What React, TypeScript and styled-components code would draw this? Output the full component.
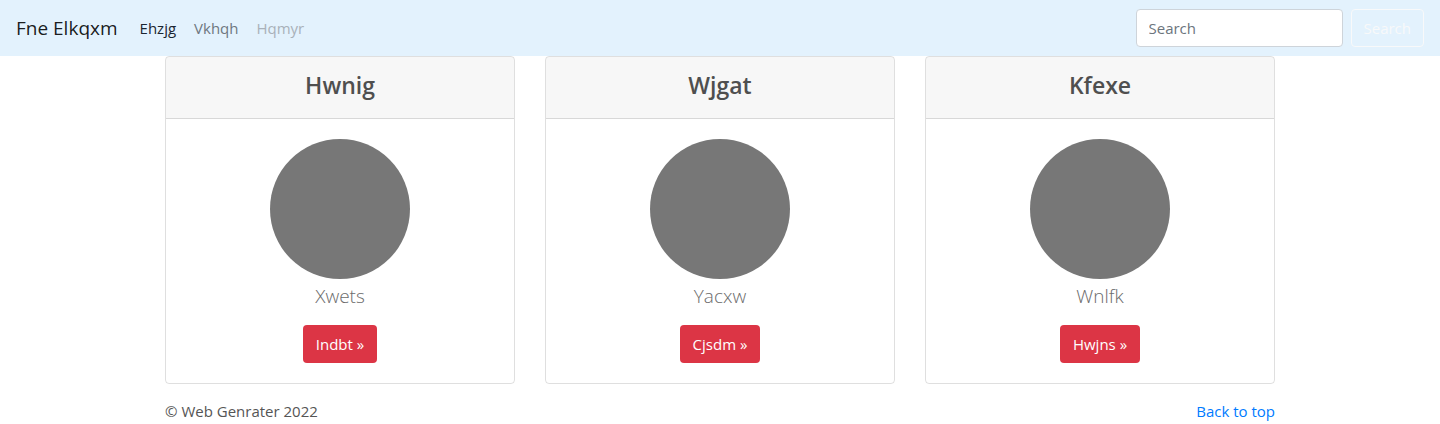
import React from 'react';
import styled, { createGlobalStyle } from 'styled-components';

const GlobalStyle = createGlobalStyle`
  * { box-sizing: border-box; }
  body {
    margin: 0;
    font-family: "Open Sans", "Noto Sans", sans-serif;
    font-size: 16px;
    line-height: 1.5;
    color: #212529;
    background: #fff;
  }
`;

const Navbar = styled.nav`
  display: flex;
  align-items: center;
  height: 56px;
  padding: 8px 16px;
  background: #e3f2fd;
`;

const Brand = styled.a`
  font-size: 19px;
  color: rgba(0, 0, 0, 0.9);
  margin-right: 13px;
  text-decoration: none;
`;

const NavList = styled.div`
  display: flex;
  flex: 1;
`;

const NavLink = styled.a<{ $state?: 'active' | 'disabled' }>`
  padding: 8px 9px;
  font-size: 15px;
  text-decoration: none;
  color: ${p =>
    p.$state === 'active'
      ? '#1b2631'
      : p.$state === 'disabled'
      ? '#a9b1b9'
      : '#6e7780'};
`;

const SearchForm = styled.form`
  display: flex;
  align-items: center;
  gap: 8px;
`;

const SearchInput = styled.input`
  width: 207px;
  height: 38px;
  padding: 6px 12px;
  font-family: inherit;
  font-size: 15px;
  color: #495057;
  background: #fff;
  border: 1px solid #ced4da;
  border-radius: 4px;
  &::placeholder { color: #6c757d; }
`;

const OutlineButton = styled.button`
  height: 38px;
  padding: 6px 12px;
  font-family: inherit;
  font-size: 15px;
  color: #f8f9fa;
  background: transparent;
  border: 1px solid #f8f9fa;
  border-radius: 4px;
`;

const Container = styled.div`
  width: 1140px;
  margin: 0 auto;
  padding: 0 15px;
`;

const CardRow = styled.div`
  display: grid;
  grid-template-columns: repeat(3, 1fr);
  gap: 30px;
`;

const Card = styled.div`
  border: 1px solid rgba(0, 0, 0, 0.125);
  border-radius: 4px;
  text-align: center;
  overflow: hidden;
`;

const CardHeader = styled.div`
  height: 62px;
  display: flex;
  align-items: center;
  justify-content: center;
  padding-bottom: 5px;
  background: rgba(0, 0, 0, 0.03);
  border-bottom: 1px solid rgba(0, 0, 0, 0.125);
`;

const CardTitle = styled.h3`
  margin: 0;
  font-size: 23px;
  font-weight: 600;
  color: #4f4f4f;
`;

const CardBody = styled.div`
  padding: 20px;
  display: flex;
  flex-direction: column;
  align-items: center;
`;

const Avatar = styled.div`
  width: 140px;
  height: 140px;
  border-radius: 50%;
  background: #777;
`;

const Lead = styled.p`
  margin: 0 0 14px;
  padding-top: 2px;
  font-size: 19px;
  font-weight: 300;
  line-height: 30px;
  color: #6b6b6b;
`;

const DangerButton = styled.a`
  display: inline-block;
  padding: 6px 13px;
  font-size: 15px;
  line-height: 26px;
  color: #fff;
  background: #dc3545;
  border-radius: 4px;
  text-decoration: none;
`;

const Footer = styled.footer`
  display: flex;
  justify-content: space-between;
  padding-top: 16px;
  font-size: 15px;
  color: #555;
`;

const TopLink = styled.a`
  color: #007bff;
  text-decoration: none;
`;

const cards = [
  { title: 'Hwnig', name: 'Xwets', action: 'Indbt' },
  { title: 'Wjgat', name: 'Yacxw', action: 'Cjsdm' },
  { title: 'Kfexe', name: 'Wnlfk', action: 'Hwjns' },
];

export default function App() {
  return (
    <>
      <GlobalStyle />
      <Navbar>
        <Brand href="#">Fne Elkqxm</Brand>
        <NavList>
          <NavLink href="#" $state="active">Ehzjg</NavLink>
          <NavLink href="#">Vkhqh</NavLink>
          <NavLink href="#" $state="disabled">Hqmyr</NavLink>
        </NavList>
        <SearchForm onSubmit={e => e.preventDefault()}>
          <SearchInput type="search" placeholder="Search" />
          <OutlineButton type="submit">Search</OutlineButton>
        </SearchForm>
      </Navbar>
      <Container>
        <CardRow>
          {cards.map(c => (
            <Card key={c.title}>
              <CardHeader>
                <CardTitle>{c.title}</CardTitle>
              </CardHeader>
              <CardBody>
                <Avatar />
                <Lead>{c.name}</Lead>
                <DangerButton href="#">{c.action} &raquo;</DangerButton>
              </CardBody>
            </Card>
          ))}
        </CardRow>
        <Footer>
          <span>&copy; Web Genrater 2022</span>
          <TopLink href="#">Back to top</TopLink>
        </Footer>
      </Container>
    </>
  );
}
